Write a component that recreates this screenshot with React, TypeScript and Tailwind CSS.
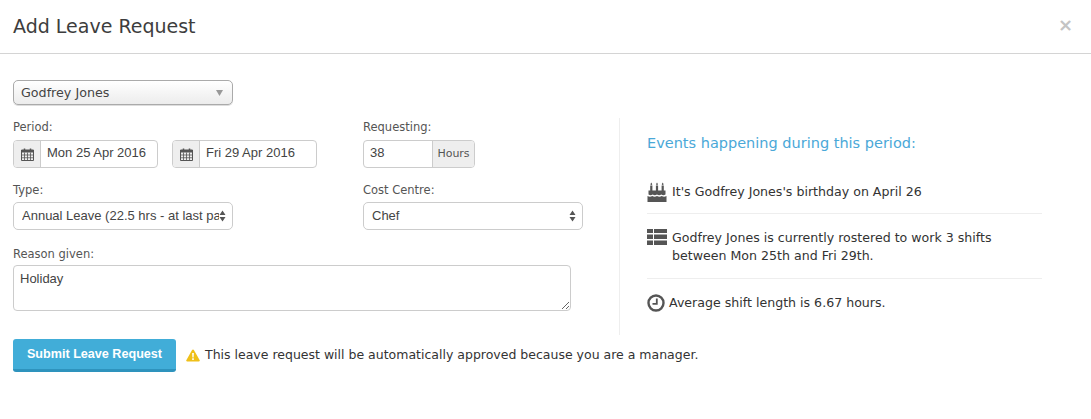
import React from "react";

const uiFont = "font-['DejaVu_Sans',sans-serif]";
const fieldFont = "font-['Liberation_Sans',sans-serif]";

const CalendarIcon = () => (
  <svg width="13" height="13" viewBox="0 0 13 13" className="text-[#555]">
    <path d="M0.5 2h12v10.5h-12z" fill="none" stroke="currentColor" />
    <path d="M0.5 2h12v2.5h-12z" fill="currentColor" />
    <path d="M3.5 0.5v2.5M9.5 0.5v2.5" stroke="currentColor" strokeWidth="1.5" />
    <path d="M3.5 4.5v8M6.5 4.5v8M9.5 4.5v8M0.5 7h12M0.5 9.75h12" stroke="currentColor" strokeWidth="0.8" />
  </svg>
);

const CakeIcon = () => (
  <svg width="20" height="20" viewBox="0 0 20 20" className="text-[#555] shrink-0">
    <path d="M3.200 3.500h2.200v6H3.200zM8.900 3.500h2.200v6H8.900zM14.600 3.500h2.200v6h-2.200z" fill="currentColor" />
    <path d="M4.300 0.500l1 1.700-1 1-1-1zM10 0.500l1 1.700-1 1-1-1zM15.700 0.500l1 1.700-1 1-1-1z" fill="currentColor" />
    <path d="M1.500 8.500h17v4c-1.500 1-2.800 1-4.200 0-1.400 1-2.900 1-4.300 0-1.400 1-2.900 1-4.300 0-1.400 1-2.700 1-4.200 0z" fill="currentColor" />
    <path d="M0.500 14c1.800 1 3.200 1 4.700 0 1.600 1 3.200 1 4.800 0 1.600 1 3.200 1 4.800 0 1.500 1 2.900 1 4.700 0v6H0.500z" fill="currentColor" />
  </svg>
);

const TableIcon = () => (
  <svg width="20" height="16" viewBox="0 0 20 16" className="text-[#555] shrink-0">
    <path d="M0 0h6v4H0zM7 0h13v4H7zM0 5.500h6v4.500H0zM7 5.500h13v4.500H7zM0 11.500h6V16H0zM7 11.500h13V16H7z" fill="currentColor" />
  </svg>
);

const ClockIcon = () => (
  <svg width="18" height="18" viewBox="0 0 18 18" className="text-[#555] shrink-0">
    <circle cx="9" cy="9" r="7.500" fill="none" stroke="currentColor" strokeWidth="2.400" />
    <path d="M9.800 4.500v5.300H5.500" fill="none" stroke="currentColor" strokeWidth="1.800" />
  </svg>
);

const WarningIcon = () => (
  <svg width="14" height="13" viewBox="0 0 14 13" className="shrink-0">
    <path d="M7 0.500c.4 0 .7.200.9.500l5.800 10.300c.3.600-.1 1.200-.8 1.200H1.100c-.7 0-1.100-.6-.8-1.200L6.100 1c.2-.3.500-.5.900-.5z" fill="#efc01a" />
    <path d="M6.100 4h1.800l-.3 4.500H6.400zM6.200 9.300h1.600v1.600H6.200z" fill="#fff" />
  </svg>
);

const SelectArrows = () => (
  <svg width="7" height="12" viewBox="0 0 7 12" className="absolute right-[7px] top-1/2 -translate-y-1/2 pointer-events-none">
    <path d="M3.500 0.500L6.500 5H0.500zM3.500 11.500L0.500 7h6z" fill="#555" />
  </svg>
);

const Label = ({ children }: { children: React.ReactNode }) => (
  <label className={`block text-[11.5px] leading-[17px] h-[17px] mb-[4px] text-[#555] ${uiFont}`}>{children}</label>
);

const NativeSelect = ({ value }: { value: string }) => (
  <div className="relative h-[28px] w-[220px] -mt-[1px]">
    <select
      defaultValue={value}
      className={`appearance-none w-full h-full bg-white border border-[#ccc] rounded-[5px] pl-[8px] pr-[13px] text-[13px] text-[#444] ${fieldFont}`}
    >
      <option>{value}</option>
    </select>
    <SelectArrows />
  </div>
);

const DateInput = ({ value }: { value: string }) => (
  <div className="flex w-[145px] h-[28px] border border-[#ccc] rounded-[4px] overflow-hidden">
    <span className="w-[27px] bg-[#eee] border-r border-[#ccc] flex items-center justify-center">
      <CalendarIcon />
    </span>
    <input
      readOnly
      value={value}
      className={`flex-1 min-w-0 pl-[6px] pb-[2px] text-[13px] text-[#444] outline-none ${fieldFont}`}
    />
  </div>
);

const App = () => {
  return (
    <div className={`w-[1091px] h-[419px] bg-white overflow-hidden ${uiFont}`}>
      <header className="h-[54px] border-b border-[#d4d4d4] pl-[13px] pr-[18px] flex items-center justify-between">
        <h4 className="text-[19px] leading-none text-[#3d3d3d] pb-[1px]">Add Leave Request</h4>
        <span className="text-[#c4c4c4] text-[18px] font-bold leading-none pb-[4px]">×</span>
      </header>

      <div className="flex pt-[26px] pl-[13px]">
        <div className="w-[606px] shrink-0">
          <div className="w-[220px] h-[25px] rounded-[5px] border border-[#aaa] bg-gradient-to-b from-white to-[#ececec] flex items-center justify-between pl-[7px] pr-[9px] text-[12.7px] text-[#444] shadow-[0_1px_0_#ddd]">
            <span>Godfrey Jones</span>
            <svg width="7" height="6" viewBox="0 0 7 6">
              <path d="M0 0h7L3.500 6z" fill="#999" />
            </svg>
          </div>

          <div className="flex mt-[14px]">
            <div className="w-[350px]">
              <Label>Period:</Label>
              <div className="flex gap-[14px]">
                <DateInput value="Mon 25 Apr 2016" />
                <DateInput value="Fri 29 Apr 2016" />
              </div>
            </div>
            <div>
              <Label>Requesting:</Label>
              <div className="flex w-[112px] h-[28px] border border-[#ccc] rounded-[4px] overflow-hidden">
                <input
                  readOnly
                  value="38"
                  className={`w-[68px] pl-[6px] pb-[2px] text-[13px] text-[#444] outline-none ${fieldFont}`}
                />
                <span className="flex-1 bg-[#eee] border-l border-[#ccc] flex items-center justify-center text-[11px] text-[#555]">
                  Hours
                </span>
              </div>
            </div>
          </div>

          <div className="flex mt-[14px]">
            <div className="w-[350px]">
              <Label>Type:</Label>
              <NativeSelect value="Annual Leave (22.5 hrs - at last pay period)" />
            </div>
            <div>
              <Label>Cost Centre:</Label>
              <NativeSelect value="Chef" />
            </div>
          </div>

          <div className="mt-[16px]">
            <Label>Reason given:</Label>
            <textarea
              readOnly
              defaultValue="Holiday"
              className={`block -mt-[2px] w-[558px] h-[46px] border border-[#ccc] rounded-[4px] px-[6px] py-[3px] text-[13px] text-[#444] outline-none ${fieldFont}`}
            />
          </div>

          <div className="flex items-center mt-[28px] whitespace-nowrap">
            <button className={`shrink-0 w-[163px] h-[33px] rounded-[3px] bg-[#41add8] border-b-[3px] border-[#2e93bd] text-white text-[12.6px] font-bold ${fieldFont}`}>
              Submit Leave Request
            </button>
            <div className="flex items-center ml-[10px] gap-[5px] text-[12.5px] text-[#333]">
              <WarningIcon />
              <span>This leave request will be automatically approved because you are a manager.</span>
            </div>
          </div>
        </div>

        <aside className="mt-[38px] h-[217px] w-[424px] border-l border-[#eee] pl-[27px]">
          <h5 className="text-[14.5px] leading-[20px] text-[#4aa8d8] mt-[15px]">Events happening during this period:</h5>
          <ul className="mt-[27px] w-[395px] text-[12.6px] leading-[18px] text-[#333]">
            <li className="flex gap-[5px] items-center h-[34px] pb-[10px] border-b border-[#eee]">
              <CakeIcon />
              <span>It's Godfrey Jones's birthday on April 26</span>
            </li>
            <li className="flex gap-[5px] pt-[15px] pb-[13px] border-b border-[#eee]">
              <span>
                <TableIcon />
              </span>
              <span>
                Godfrey Jones is currently rostered to work 3 shifts
                <br />
                between Mon 25th and Fri 29th.
              </span>
            </li>
            <li className="flex gap-[4px] items-center pt-[15px]">
              <ClockIcon />
              <span>Average shift length is 6.67 hours.</span>
            </li>
          </ul>
        </aside>
      </div>
    </div>
  );
};

export default App;
